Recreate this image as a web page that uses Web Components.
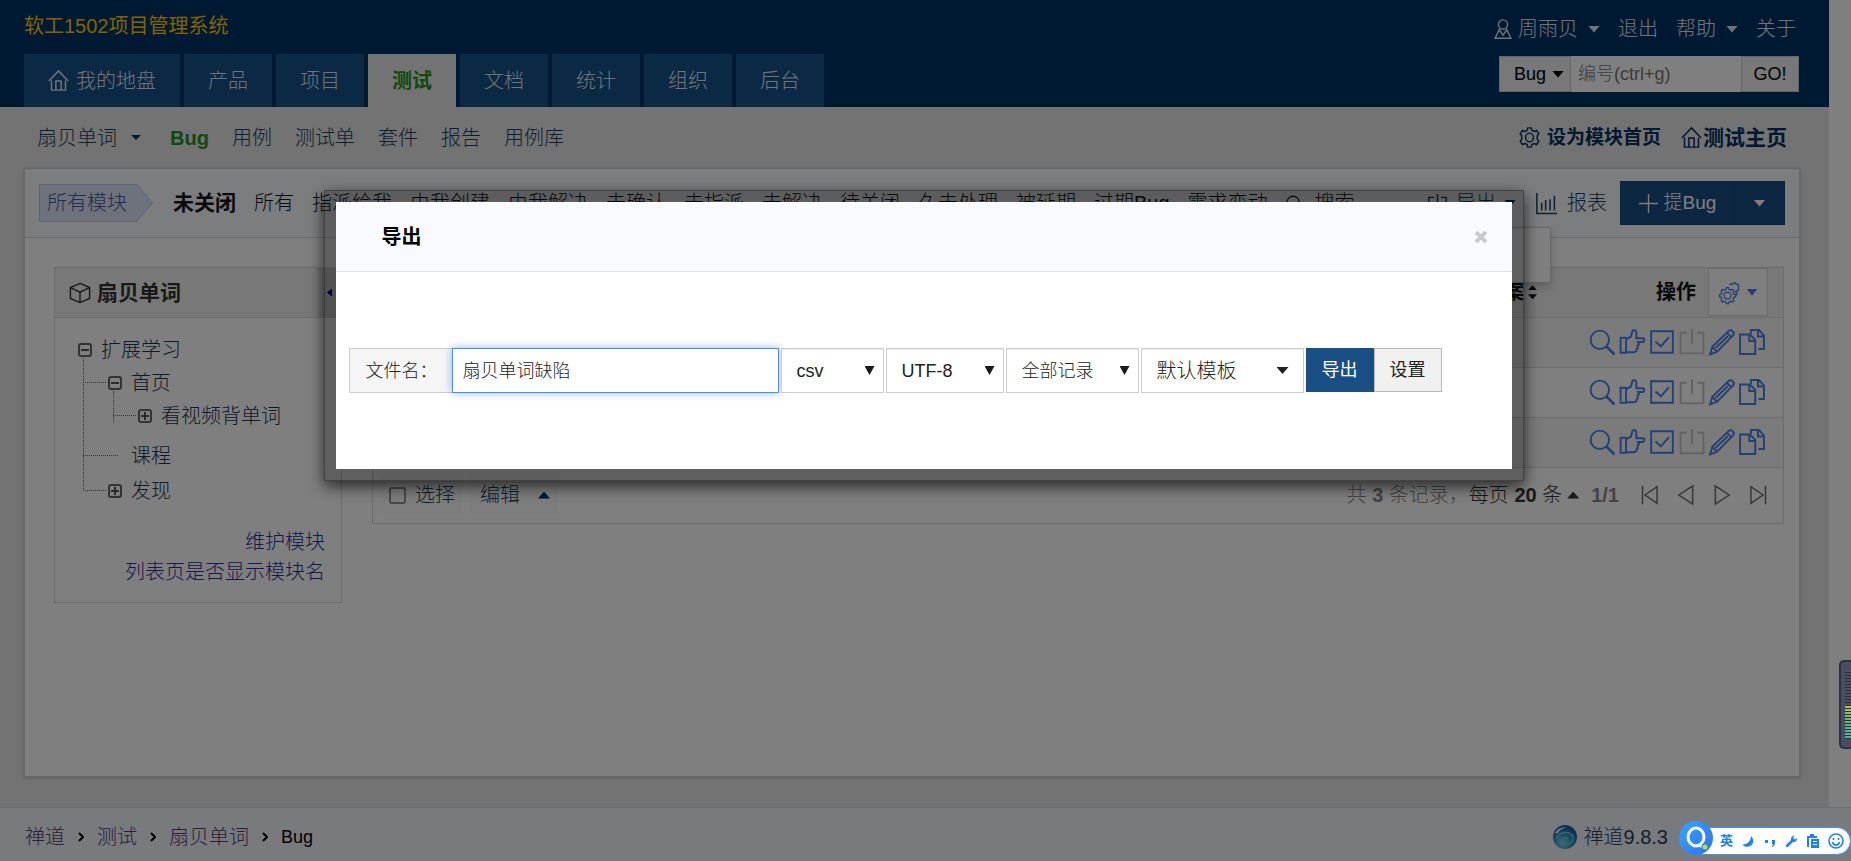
<!DOCTYPE html>
<html lang="zh-CN">
<head>
<meta charset="utf-8">
<title>扇贝单词::Bug</title>
<style>
  html, body { margin: 0; height: 100%; }
  body {
    font-family: "Liberation Sans", "Noto Sans CJK SC", sans-serif;
    font-size: 20px;
    font-weight: 300;
    line-height: 32px;
    color: #141414;
    background: #fff;
    overflow: hidden;
  }
</style>
</head>
<body>
<zt-app>
  <zt-header slot="header"></zt-header>
  <zt-subnav slot="subnav"></zt-subnav>
  <zt-panel>
    <zt-featurebar slot="bar"></zt-featurebar>
    <zt-module-tree slot="side"></zt-module-tree>
    <zt-bug-table></zt-bug-table>
  </zt-panel>
  <zt-footer slot="footer"></zt-footer>
</zt-app>
<zt-modal heading="导出">
  <zt-export-form></zt-export-form>
</zt-modal>
<zt-meter></zt-meter>
<zt-ime-bar></zt-ime-bar>

<script>
const baseCss = `
  :host, *, *::before, *::after { box-sizing: border-box; }
  a { color: inherit; text-decoration: none; }
  button, input, select { font: inherit; color: inherit; margin: 0; border-radius: 0; }
  button { cursor: pointer; padding: 0; border: 0; background: none; }
  ul, ol { list-style: none; margin: 0; padding: 0; }
`;

class ZtElement extends HTMLElement {
  constructor() {
    super();
    this.attachShadow({ mode: "open" });
    this.render();
  }

  render() {
    this.shadowRoot.innerHTML = `<style>${baseCss}${this.constructor.css}</style>${this.html()}`;
  }
}

const icons = {
  home: `<path d="M1 12.500 12 1l11 11.500M4 12v11h16V12M9 23V12.500h6V23"/>`,
  user: `<circle cx="12" cy="6.500" r="5.500"/><path d="M8 11.500 2.500 23h19L16 11.500M8 13.500l4 6 4-6"/>`,
  gear: `<path d="M10 1h4l.8 3 2.400 1.200 2.800-1.200 2.600 3.600-1.700 2.400v4l1.700 2.400-2.600 3.600-2.800-1.200-2.400 1.200-.8 3h-4l-.8-3-2.400-1.200L4 20l-2.600-3.600 1.700-2.400v-4L1.400 7.600 4 4l2.800 1.200 2.400-1.200z"/><ellipse cx="12" cy="12" rx="4.500" ry="5"/>`,
  gears: `<path d="m8.500 6.500 2.500 0 .5 2 2 .8 1.800-1 1.800 1.800-1 1.800.8 2 2 .5v2.600l-2 .5-.8 2 1 1.800-1.800 1.700-1.800-1-2 .8-.5 2H8.500l-.5-2-2-.8-1.800 1-1.800-1.700 1-1.800-.8-2-2-.5v-2.600l2-.5.8-2-1-1.800L4.200 8.300l1.800 1 2-.8z"/><circle cx="9.800" cy="15.500" r="4"/><path d="m12 3.500 1.500-1.500 1.800.8 1.200-1.800h2.200l.8 1.800 2-.3 1.300 2-1 1.700.9 1.800-1 1.900-2 .1-.5 2 1.600 1-.6 1.800-1.500.5"/>`,
  search: `<circle cx="10" cy="10" r="8.500"/><path d="m16 16 7.500 7.500" stroke-width="2.500"/>`,
  export: `<path d="M8 5H2v17h20V5h-6M12 1v14m-4-4 4 4 4-4"/>`,
  chart: `<path d="M1 0v23.500H24M6.500 20V11M11 20V8M16 20V7M21 20V3"/>`,
  plus: `<path d="M12 0v24M0 12h24"/>`,
  cube: `<path d="M12 .5 23.500 5.500v13L12 23.500.5 18.500v-13zM.5 5.500 12 11l11.500-5.500M12 11v12.500"/>`,
  thumb: `<path d="M1.500 8h5v14h-5zM6.500 9.500 11 7l1.500-5.500 2-.5 1.500 1.500v6h6.500l1 1.500-1 2h-5l1 2-1.500 1.500.5 2-1.500 1.500v1.500L14 21.500H6.500"/>`,
  check: `<path d="M2 2h20v20H2zM6 11.500l5 4.500 7.500-8.500"/>`,
  power: `<path d="M7 3.500H1.500v19h21v-19H17M12 0v13.500"/>`,
  pencil: `<path d="M1 23.500 3 16.500 18.500 1.500l2-.5L23 3.500l-.5 2L7.500 21zM16.500 3.500l4 4M3 16.500l4.500 4.500M6 17.500l11.500-11"/>`,
  files: `<path d="M1 5h9l5 5v13H1zM9.500 5v6H15M11 4.500V1h7.500L23 6v12.500h-5M17.500 1v6H23"/>`,
  first: `<path d="M3 1v22M20.500 2v20L6 12z"/>`,
  prev: `<path d="M20 1v22L3.500 12z"/>`,
  next: `<path d="M4 1v22l16.500-11z"/>`,
  last: `<path d="M21 1v22M3.500 2v20L18 12z"/>`,
};

class ZtIcon extends ZtElement {
  static css = `
    :host { display: inline-block; flex: none; width: var(--icon-size, 20px); height: var(--icon-size, 20px); }
    svg { display: block; width: 100%; height: 100%; fill: none; stroke: currentColor; stroke-width: var(--icon-stroke, 1.7); overflow: visible; }
  `;
  html() {
    return `<svg viewBox="0 0 24 24" aria-hidden="true">${icons[this.getAttribute("name")] || ""}</svg>`;
  }
}
customElements.define("zt-icon", ZtIcon);

// small triangle used by all drop-downs; "up" flips it
class ZtCaret extends ZtElement {
  static css = `
    :host { display: inline-block; flex: none; width: 12px; height: 7px; background: currentColor; clip-path: polygon(0 0, 100% 0, 50% 100%); }
    :host([up]) { clip-path: polygon(0 100%, 100% 100%, 50% 0); }
  `;
  html() { return ""; }
}
customElements.define("zt-caret", ZtCaret);

class ZtApp extends ZtElement {
  static css = `
    :host { display: flex; flex-direction: column; min-height: 100vh; }
    .page { flex: 1; display: flex; flex-direction: column; margin-right: 22px; background: #e6e6e6; }
    main { flex: 1; display: flex; flex-direction: column; padding: 0 29px 30px 24px; }
  `;
  html() {
    return `
      <div class="page">
        <slot name="header"></slot>
        <main><slot name="subnav"></slot><slot></slot></main>
      </div>
      <slot name="footer"></slot>`;
  }
}
customElements.define("zt-app", ZtApp);

class ZtHeader extends ZtElement {
  static css = `
    :host { display: flex; justify-content: space-between; background: #036; color: #e0e8f0; padding: 0 30px 0 24px; }
    h1 { margin: 0 0 2px; font-size: 20px; line-height: 52px; font-weight: 400; color: #ffc800; }
    .tabs { display: flex; gap: 4px; }
    .tabs a { display: flex; align-items: center; gap: 7px; height: 53px; padding: 0 24px; background: #165089; }
    .tabs a.home { --icon-size: 21px; }
    .tabs a.active { background: #e6e6e6; color: #1f921f; font-weight: 700; }
    .user { display: flex; justify-content: flex-end; align-items: center; gap: 18px; height: 56px; padding: 2px 3px 0 0; }
    .user a { display: flex; align-items: center; gap: 10px; }
    .user span { display: flex; align-items: center; gap: 5px; }
    form { display: flex; width: 300px; height: 36px; margin-left: auto; font-size: 18px; color: #000; }
    form button { background: #f0f0f0; border: 1px solid #ccc; }
    .type { display: flex; align-items: center; justify-content: center; gap: 6px; width: 72px; padding-left: 8px; }
    input { flex: 1; min-width: 0; border: 0; background: #fff; padding: 0 7px; }
    input::placeholder { color: #777; opacity: 1; }
    .go { width: 58px; }
  `;
  html() {
    const tabs = ["产品", "项目", "测试", "文档", "统计", "组织", "后台"];
    return `
      <div>
        <h1>软工1502项目管理系统</h1>
        <nav class="tabs">
          <a class="home" href="#"><zt-icon name="home"></zt-icon>我的地盘</a>
          ${tabs.map(t => `<a href="#"${t === "测试" ? ' class="active"' : ""}>${t}</a>`).join("")}
        </nav>
      </div>
      <div>
        <div class="user">
          <a href="#"><span><zt-icon name="user"></zt-icon>周雨贝</span><zt-caret></zt-caret></a>
          <a href="#">退出</a>
          <a href="#">帮助<zt-caret></zt-caret></a>
          <a href="#">关于</a>
        </div>
        <form>
          <button type="button" class="type">Bug<zt-caret></zt-caret></button>
          <input type="text" placeholder="编号(ctrl+g)" aria-label="编号">
          <button type="button" class="go">GO!</button>
        </form>
      </div>`;
  }
}
customElements.define("zt-header", ZtHeader);

class ZtSubnav extends ZtElement {
  static css = `
    :host { display: flex; align-items: center; justify-content: space-between; height: 61px; padding: 0 13px; color: #1a4060; }
    nav, .right, a { display: flex; align-items: center; }
    nav { gap: 23px; }
    .product { gap: 14px; margin-right: 6px; }
    .product zt-caret { width: 10px; height: 5px; color: #036; }
    .active { color: #1f921f; font-weight: 700; }
    .right { gap: 20px; font-weight: 700; color: #003060; --icon-size: 21px; }
    .set { gap: 7px; font-size: 19px; }
    .main { gap: 1px; font-size: 21px; }
  `;
  html() {
    return `
      <nav>
        <a class="product" href="#">扇贝单词<zt-caret></zt-caret></a>
        <a class="active" href="#">Bug</a>
        ${["用例", "测试单", "套件", "报告", "用例库"].map(t => `<a href="#">${t}</a>`).join("")}
      </nav>
      <div class="right">
        <a class="set" href="#"><zt-icon name="gear"></zt-icon>设为模块首页</a>
        <a class="main" href="#"><zt-icon name="home"></zt-icon>测试主页</a>
      </div>`;
  }
}
customElements.define("zt-subnav", ZtSubnav);

class ZtPanel extends ZtElement {
  static css = `
    :host { flex: 1; display: flex; flex-direction: column; background: #fff; border: 1px solid #d0d0d0; box-shadow: 0 1px 4px rgba(0, 0, 0, .2); }
    .body { display: flex; align-items: flex-start; gap: 30px; padding: 29px 15px 29px 29px; }
    .content { flex: 1; min-width: 0; }
  `;
  html() {
    return `
      <slot name="bar"></slot>
      <div class="body">
        <slot name="side"></slot>
        <div class="content"><slot></slot></div>
      </div>`;
  }
}
customElements.define("zt-panel", ZtPanel);

class ZtFeaturebar extends ZtElement {
  static css = `
    :host { display: flex; align-items: center; justify-content: space-between; height: 69px; padding: 0 14px; background: #f8faff; border-bottom: 1px solid #d8d8d8; white-space: nowrap; }
    .left, .actions, .left a, .actions a, .actions button { display: flex; align-items: center; }
    .left { gap: 18px; }
    .tag { position: relative; height: 38px; width: 114px; padding-left: 8px; margin-right: 2px; color: #4858a0; }
    .tag svg { position: absolute; inset: 0; }
    .tag span { position: relative; }
    .active { font-size: 21px; font-weight: 700; }
    .search { gap: 12px; --icon-size: 17px; }
    .actions { gap: 20px; color: #1a4060; --icon-size: 21px; }
    .actions a { gap: 10px; }
    .export { position: relative; }
    .export a { gap: 8px; }
    .export zt-caret { color: #036; }
    .menu { position: absolute; top: 40px; right: -35px; width: 200px; height: 56px; background: #fff; border: 1px solid #ccc; box-shadow: 0 4px 8px rgba(0, 0, 0, .2); }
    .create { display: flex; height: 44px; margin-left: -7px; }
    .create button { justify-content: center; gap: 6px; background: #1a4f85; border: 1px solid #164472; color: #fff; font-size: 19px; --icon-size: 19px; }
    .create .new { width: 115px; }
    .create .more { width: 50px; border-left: 0; }
  `;
  html() {
    const filters = ["所有", "指派给我", "由我创建", "由我解决", "未确认", "未指派", "未解决", "待关闭", "久未处理", "被延期", "过期Bug", "需求变动"];
    return `
      <nav class="left">
        <a class="tag" href="#">
          <svg viewBox="0 0 114 38" width="114" height="38" fill="#dce4fa" stroke="#b8c4e4"><path d="M.5.5h97l16 18.500-16 18.500H.5z"/></svg>
          <span>所有模块</span>
        </a>
        <a class="active" href="#">未关闭</a>
        ${filters.map(t => `<a href="#">${t}</a>`).join("")}
        <a class="search" href="#"><zt-icon name="search"></zt-icon>搜索</a>
      </nav>
      <div class="actions">
        <div class="export">
          <a href="#"><zt-icon name="export"></zt-icon>导出<zt-caret></zt-caret></a>
          <div class="menu"></div>
        </div>
        <a href="#"><zt-icon name="chart"></zt-icon>报表</a>
        <div class="create">
          <button type="button" class="new"><zt-icon name="plus"></zt-icon>提Bug</button>
          <button type="button" class="more" aria-label="更多"><zt-caret></zt-caret></button>
        </div>
      </div>`;
  }
}
customElements.define("zt-featurebar", ZtFeaturebar);

class ZtModuleTree extends ZtElement {
  static css = `
    :host { display: block; flex: none; width: 288px; border: 1px solid #d8d8d8; }
    header { display: flex; height: 50px; background: #f0f0f0; border-bottom: 1px solid #d8d8d8; }
    h2 { flex: 1; display: flex; align-items: center; gap: 7px; margin: 0; padding-left: 15px; font-size: 21px; font-weight: 700; color: #333; }
    .fold { width: 23px; background: #ddd; display: flex; align-items: center; padding-left: 9px; }
    .fold i { width: 5px; height: 8px; background: #0000b0; clip-path: polygon(100% 0, 100% 100%, 0 50%); }
    .tree { padding: 15px 0 0 23px; color: #1a3550; }
    .row { display: flex; align-items: center; gap: 9px; height: 33px; }
    .row button { position: relative; width: 14px; height: 14px; border: 2px solid #666; border-radius: 3px; }
    .row button::before, .row button.plus::after { content: ""; position: absolute; inset: 4px 1px; background: #555; }
    .row button.plus::after { inset: 1px 4px; }
    ul ul { position: relative; margin-left: 30px; }
    ul ul::before { content: ""; position: absolute; left: -25px; top: -8px; bottom: 16px; border-left: 1px dotted #666; }
    ul ul li { position: relative; }
    ul ul li::before { content: ""; position: absolute; left: -25px; top: 16px; width: 23px; border-top: 1px dotted #666; }
    ul ul ul { padding-bottom: 7px; }
    ul ul li.leaf { margin-bottom: 2px; }
    ul ul li.leaf::before { width: 35px; }
    .leaf .row { padding-left: 23px; }
    .links { display: flex; flex-direction: column; align-items: flex-end; padding: 20px 16px 15px; line-height: 30px; color: #2a30a0; }
  `;
  html() {
    return `
      <header>
        <h2><zt-icon name="cube"></zt-icon>扇贝单词</h2>
        <button type="button" class="fold" aria-label="收起"><i></i></button>
      </header>
      <ul class="tree">
        <li>
          <div class="row"><button type="button" aria-label="收起"></button><a href="#">扩展学习</a></div>
          <ul>
            <li>
              <div class="row"><button type="button" aria-label="收起"></button><a href="#">首页</a></div>
              <ul>
                <li><div class="row"><button type="button" class="plus" aria-label="展开"></button><a href="#">看视频背单词</a></div></li>
              </ul>
            </li>
            <li class="leaf"><div class="row"><a href="#">课程</a></div></li>
            <li><div class="row"><button type="button" class="plus" aria-label="展开"></button><a href="#">发现</a></div></li>
          </ul>
        </li>
      </ul>
      <div class="links"><a href="#">维护模块</a><a href="#">列表页是否显示模块名</a></div>`;
  }
}
customElements.define("zt-module-tree", ZtModuleTree);

class ZtBugTable extends ZtElement {
  static css = `
    :host { display: block; border: 1px solid #d8d8d8; }
    table { width: 100%; border-collapse: collapse; table-layout: fixed; }
    th, td { height: 50px; padding: 0; border-bottom: 1px solid #d8d8d8; }
    thead { background: #f0f0f0; }
    thead th { height: 49px; }
    tbody tr:nth-child(odd) { background: #f7f7f7; }
    th { font-weight: 700; color: #111; }
    .case { width: 100px; }
    .ops { width: 246px; }
    .case div, .ops div, .icons { display: flex; align-items: center; justify-content: flex-end; }
    .sort { display: grid; gap: 4px; margin-left: 4px; }
    .sort zt-caret { width: 9px; height: 5px; }
    .ops div { gap: 12px; padding-right: 15px; }
    .custom { display: flex; align-items: center; justify-content: center; gap: 7px; width: 60px; height: 48px; background: #fff; border: 1px solid #d8d8d8; color: #4a80e8; --icon-size: 21px; --icon-stroke: 1.5; }
    .custom zt-caret { width: 11px; }
    .icons { gap: 4px; padding-right: 18px; color: #4a80e8; --icon-size: 26px; --icon-stroke: 1.8; }
    .icons a { display: flex; }
    .icons .off { color: #c4c4c4; }
    .foot { display: flex; align-items: center; justify-content: space-between; height: 55px; padding: 0 15px 0 7px; color: #24405a; }
    .batch, .batch label, .batch button, .pager, .pager a { display: flex; align-items: center; }
    .batch { gap: 7px; }
    .batch label, .batch button { height: 38px; background: #fafafa; }
    .batch label { gap: 9px; padding: 0 8px 0 9px; }
    .batch input { appearance: none; width: 17px; height: 17px; border: 2px solid #909090; border-radius: 3px; }
    .batch button { gap: 18px; padding: 0 9px 0 10px; }
    .batch zt-caret { color: #036; }
    .pager { color: #888; }
    .pager b { font-weight: 700; }
    .size { color: #333; gap: 5px; margin-right: 12px; }
    .pages { display: flex; gap: 16px; margin-left: 21px; --icon-size: 20px; --icon-stroke: 1.8; color: #707070; }
  `;
  html() {
    const row = `
      <tr><td></td><td></td><td><div class="icons">
        <a href="#" aria-label="详情"><zt-icon name="search"></zt-icon></a>
        <a href="#" aria-label="确认"><zt-icon name="thumb"></zt-icon></a>
        <a href="#" aria-label="解决"><zt-icon name="check"></zt-icon></a>
        <a href="#" aria-label="关闭" class="off"><zt-icon name="power"></zt-icon></a>
        <a href="#" aria-label="编辑"><zt-icon name="pencil"></zt-icon></a>
        <a href="#" aria-label="复制"><zt-icon name="files"></zt-icon></a>
      </div></td></tr>`;
    return `
      <table>
        <thead>
          <tr>
            <th></th>
            <th class="case"><div>案<span class="sort"><zt-caret up></zt-caret><zt-caret></zt-caret></span></div></th>
            <th class="ops"><div>操作<button type="button" class="custom" aria-label="自定义"><zt-icon name="gears"></zt-icon><zt-caret></zt-caret></button></div></th>
          </tr>
        </thead>
        <tbody>${row.repeat(3)}</tbody>
      </table>
      <div class="foot">
        <div class="batch">
          <label><input type="checkbox">选择</label>
          <button type="button">编辑<zt-caret up></zt-caret></button>
        </div>
        <div class="pager">
          <span>共 <b>3</b> 条记录，</span>
          <a class="size" href="#"><span>每页 <b>20</b> 条</span><zt-caret up></zt-caret></a>
          <b>1/1</b>
          <div class="pages">
            <a href="#" aria-label="首页"><zt-icon name="first"></zt-icon></a>
            <a href="#" aria-label="上一页"><zt-icon name="prev"></zt-icon></a>
            <a href="#" aria-label="下一页"><zt-icon name="next"></zt-icon></a>
            <a href="#" aria-label="末页"><zt-icon name="last"></zt-icon></a>
          </div>
        </div>
      </div>`;
  }
}
customElements.define("zt-bug-table", ZtBugTable);

class ZtFooter extends ZtElement {
  static css = `
    :host { display: flex; align-items: center; justify-content: space-between; height: 54px; padding: 4px 183px 0 25px; background: #f0f5fc; border-top: 1px solid #dadde2; }
    nav, .powered { display: flex; align-items: center; }
    nav { gap: 13px; color: #5a3c70; }
    nav svg { width: 6px; height: 10px; fill: none; stroke: #000; stroke-width: 2; }
    nav b { font-size: 18px; font-weight: 400; color: #000; }
    .powered { gap: 7px; color: #24405a; }
    .powered svg { width: 24px; height: 24px; }
  `;
  html() {
    const sep = `<svg viewBox="0 0 6 10"><path d="m1 1 4 4-4 4"/></svg>`;
    return `
      <nav><a href="#">禅道</a>${sep}<a href="#">测试</a>${sep}<a href="#">扇贝单词</a>${sep}<b>Bug</b></nav>
      <a class="powered" href="#">
        <svg viewBox="0 0 24 24">
          <defs><radialGradient id="g" cx=".4" cy=".75" r=".8"><stop offset="0" stop-color="#7cdcec"/><stop offset=".5" stop-color="#3090c0"/><stop offset="1" stop-color="#105098"/></radialGradient></defs>
          <circle cx="12" cy="12" r="12" fill="url(#g)"/>
          <path d="M2 8c3-5 8-7 13-5-3-1-8 1-10 5z" fill="#e8f4ff"/>
          <path d="M3 13c3-5 11-8 16-3 3 4 0 9-5 9-4 0-6-4-3-6 2-1 4 0 4 2" fill="none" stroke="#70c8dc" stroke-width="1.500"/>
        </svg>
        禅道9.8.3
      </a>`;
  }
}
customElements.define("zt-footer", ZtFooter);

class ZtModal extends ZtElement {
  static css = `
    :host { position: fixed; inset: 0; z-index: 10; display: flex; justify-content: center; align-items: flex-start; padding: 190px 4px 0 0; background: rgba(0, 0, 0, .5); }
    .frame { width: min(1200px, 90%); padding: 11px; border: 1px solid rgba(0, 0, 0, .3); background: rgba(0, 0, 0, .25); box-shadow: 0 5px 15px rgba(0, 0, 0, .7); }
    .dialog { background: #fff; }
    header { display: flex; align-items: center; justify-content: space-between; height: 70px; padding: 0 25px 0 46px; background: #f8faff; border-bottom: 1px solid #e5e5e5; }
    h2 { margin: 0; font-size: 20px; font-weight: 700; color: #000; }
    header svg { display: block; width: 12px; height: 12px; stroke: #c8cacf; stroke-width: 4; }
    .body { padding: 76px 13px; }
  `;
  html() {
    return `
      <div class="frame">
        <div class="dialog" role="dialog" aria-modal="true">
          <header>
            <h2>${this.getAttribute("heading")}</h2>
            <button type="button" aria-label="关闭"><svg viewBox="0 0 12 12"><path d="m1 1 10 10M11 1 1 11"/></svg></button>
          </header>
          <div class="body"><slot></slot></div>
        </div>
      </div>`;
  }
}
customElements.define("zt-modal", ZtModal);

class ZtExportForm extends ZtElement {
  static css = `
    :host { display: block; font-size: 18px; color: #222; }
    form { display: flex; height: 45px; gap: 2px; }
    .group { display: flex; }
    label { display: flex; align-items: center; width: 103px; padding-left: 16px; background: #f5f5f5; border: 1px solid #ccc; border-right: 0; }
    input { width: 327px; padding: 0 10px; background: #fff; border: 1px solid #4a8cf8; outline: 0; box-shadow: 0 0 8px rgba(74, 140, 248, .6); }
    .select { position: relative; }
    .select::after { content: ""; position: absolute; right: 9px; top: 18px; width: 10px; height: 9px; background: #1a1a1a; clip-path: polygon(0 0, 100% 0, 50% 100%); pointer-events: none; }
    select { appearance: none; width: 100%; height: 100%; padding: 0 15px; background: #fff; border: 1px solid #ccc; box-shadow: inset 0 1px 1px rgba(0, 0, 0, .08); }
    .type { width: 103px; }
    .encode { width: 118px; }
    .scope { width: 133px; }
    .tpl { display: flex; align-items: center; justify-content: space-between; width: 163px; padding: 0 14px 0 15px; border: 1px solid #ccc; box-shadow: inset 0 1px 1px rgba(0, 0, 0, .08); font-size: 20px; }
    .buttons { display: flex; height: 44px; }
    .buttons button { width: 68px; border: 1px solid #bbb; background: #f0f0f0; font-weight: 400; }
    .buttons .primary { background: #1a4f85; border-color: #1a4f85; color: #fff; }
  `;
  html() {
    return `
      <form>
        <div class="group"><label for="name">文件名：</label><input id="name" type="text" value="扇贝单词缺陷"></div>
        <div class="select type"><select aria-label="类型"><option>csv</option></select></div>
        <div class="select encode"><select aria-label="编码"><option>UTF-8</option></select></div>
        <div class="select scope"><select aria-label="范围"><option>全部记录</option></select></div>
        <button type="button" class="tpl">默认模板<zt-caret></zt-caret></button>
        <div class="buttons">
          <button type="button" class="primary">导出</button><button type="button">设置</button>
        </div>
      </form>`;
  }
}
customElements.define("zt-export-form", ZtExportForm);

// load meter docked to the right edge of the desktop
class ZtMeter extends ZtElement {
  static css = `
    :host { position: fixed; right: 0; bottom: 112px; z-index: 20; width: 12px; height: 89px; padding: 8px 0 8px 4px; background: #484e60; border: 2px solid #2c3040; border-right: 0; border-radius: 5px 0 0 5px; }
    div { height: 100%; background: repeating-linear-gradient(transparent 0 2px, #2a2e3c 2px 3px), linear-gradient(#4c5264 0 52%, #b8c060 52%, #60b878 75%, #40b8b0); }
  `;
  html() { return `<div></div>`; }
}
customElements.define("zt-meter", ZtMeter);

class ZtImeBar extends ZtElement {
  static css = `
    :host { position: fixed; right: 0; bottom: 6px; z-index: 20; display: flex; align-items: center; color: #2080f8; }
    .logo { position: relative; width: 34px; height: 34px; margin-right: -22px; }
    .bar { display: flex; align-items: center; justify-content: space-between; height: 28px; width: 160px; margin-top: 7px; padding: 0 6px 0 28px; background: #fff; border: 1px solid #3a94ff; border-radius: 0 14px 14px 0; font-size: 13px; line-height: 26px; font-weight: 700; }
    .bar svg { width: 12px; height: 14px; fill: currentColor; }
    .bar .face { width: 16px; height: 16px; fill: none; stroke: currentColor; stroke-width: 1.6; }
  `;
  html() {
    return `
      <svg class="logo" viewBox="0 0 34 34">
        <defs><linearGradient id="q" x1="0" y1="0" x2="1" y2="1"><stop offset="0" stop-color="#35a8ff"/><stop offset="1" stop-color="#2f6ef8"/></linearGradient></defs>
        <circle cx="17" cy="17" r="17" fill="url(#q)"/>
        <ellipse cx="17" cy="16" rx="8" ry="9" fill="none" stroke="#fff" stroke-width="3"/>
        <path d="m17 25 7 2-2-4z" fill="#fff"/>
        <circle cx="26" cy="26" r="3.500" fill="#2f7af8"/><circle cx="26" cy="26" r="2.500" fill="#a8f020"/>
      </svg>
      <div class="bar">
        <span>英</span>
        <svg viewBox="0 0 12 14"><path d="M9 2c3 3 3 7 0 9.500-3 2-7 1.500-8.500-1C5 11 9 7 9 2z"/></svg>
        <svg viewBox="0 0 12 14"><path d="M1 6h3v3H1zM8 6h3v4l-2 3H8l1-3H8z"/></svg>
        <svg viewBox="0 0 12 14"><path d="M1 11 6 6c-.5-2 1-4.500 3.500-4.500L8 4l2 1.500L12 4c.3 3-2 4.500-4.500 4.200L3 13c-1.500.5-2.500-.8-2-2z"/></svg>
        <svg viewBox="0 0 12 14"><path d="M0 2h3V0h4v2h3v2H2v9H0zM4 5h8v9H4zm2 2v1h4V7zm0 3v1h4v-1z" fill-rule="evenodd"/></svg>
        <svg class="face" viewBox="0 0 16 16"><circle cx="8" cy="8" r="7"/><path d="M4.500 9c1 4 6 4 7 0M5.500 5v2M10.500 5v2"/></svg>
      </div>`;
  }
}
customElements.define("zt-ime-bar", ZtImeBar);
</script>
</body>
</html>
